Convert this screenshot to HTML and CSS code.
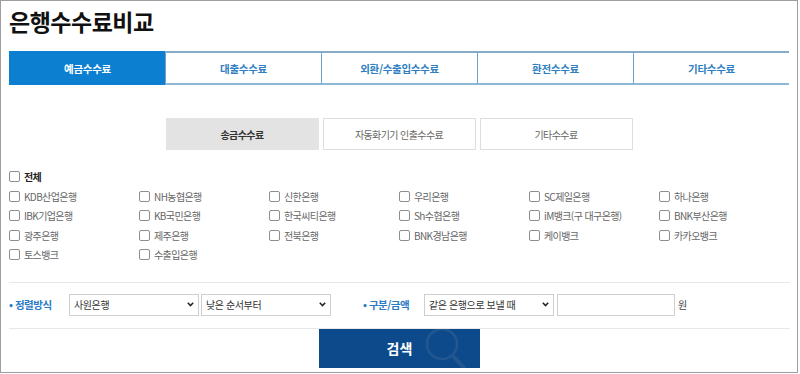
FILE: index.html
```html
<!DOCTYPE html>
<html lang="ko">
<head>
<meta charset="utf-8">
<title>은행수수료비교</title>
<link rel="stylesheet" href="styles.css">
</head>
<body>
<div class="frame">
  <h1 class="title">은행수수료비교</h1>

  <nav class="tabs">
    <div class="tab active">예금수수료</div>
    <div class="tab">대출수수료</div>
    <div class="tab">외환/수출입수수료</div>
    <div class="tab">환전수수료</div>
    <div class="tab">기타수수료</div>
  </nav>

  <div class="subtabs">
    <div class="subtab on">송금수수료</div>
    <div class="subtab">자동화기기 인출수수료</div>
    <div class="subtab">기타수수료</div>
  </div>

  <div class="banks">
    <label class="chk all"><span class="box"></span>전체</label>
    <label class="chk"><span class="box"></span>KDB산업은행</label>
    <label class="chk"><span class="box"></span>NH농협은행</label>
    <label class="chk"><span class="box"></span>신한은행</label>
    <label class="chk"><span class="box"></span>우리은행</label>
    <label class="chk"><span class="box"></span>SC제일은행</label>
    <label class="chk"><span class="box"></span>하나은행</label>
    <label class="chk"><span class="box"></span>IBK기업은행</label>
    <label class="chk"><span class="box"></span>KB국민은행</label>
    <label class="chk"><span class="box"></span>한국씨티은행</label>
    <label class="chk"><span class="box"></span>Sh수협은행</label>
    <label class="chk"><span class="box"></span>iM뱅크(구 대구은행)</label>
    <label class="chk"><span class="box"></span>BNK부산은행</label>
    <label class="chk"><span class="box"></span>광주은행</label>
    <label class="chk"><span class="box"></span>제주은행</label>
    <label class="chk"><span class="box"></span>전북은행</label>
    <label class="chk"><span class="box"></span>BNK경남은행</label>
    <label class="chk"><span class="box"></span>케이뱅크</label>
    <label class="chk"><span class="box"></span>카카오뱅크</label>
    <label class="chk"><span class="box"></span>토스뱅크</label>
    <label class="chk"><span class="box"></span>수출입은행</label>
  </div>

  <div class="form">
    <span class="flabel">• 정렬방식</span>
    <div class="sel s1"><span>사원은행</span><svg class="chev" width="7" height="5" viewBox="0 0 7 5"><path d="M0.8 0.8 L3.5 3.6 L6.2 0.8" fill="none" stroke="#222" stroke-width="1.5"/></svg></div>
    <div class="sel s2"><span>낮은 순서부터</span><svg class="chev" width="7" height="5" viewBox="0 0 7 5"><path d="M0.8 0.8 L3.5 3.6 L6.2 0.8" fill="none" stroke="#222" stroke-width="1.5"/></svg></div>
    <span class="flabel l2">• 구분/금액</span>
    <div class="sel s3"><span>같은 은행으로 보낼 때</span><svg class="chev" width="7" height="5" viewBox="0 0 7 5"><path d="M0.8 0.8 L3.5 3.6 L6.2 0.8" fill="none" stroke="#222" stroke-width="1.5"/></svg></div>
    <div class="inp"></div>
    <span class="won">원</span>
  </div>

  <div class="actions">
    <button class="search">검색
      <svg class="glass" width="70" height="40" viewBox="0 0 70 40"><circle cx="35" cy="15" r="15" fill="none" stroke="#23578f" stroke-width="2.5"/><path d="M46 27 L58 40" stroke="#23578f" stroke-width="4" fill="none"/></svg>
    </button>
  </div>
</div>
</body>
</html>
```
FILE: styles.css
```css
* { box-sizing: border-box; }
body {
  margin: 0;
  background: #fff;
  font-family: "Noto Sans CJK KR", "Noto Sans", sans-serif;
}
.frame {
  width: 798px;
  height: 373px;
  border: 1px solid #9e9e9e;
  padding: 3px 0 0 8px;
  overflow: hidden;
}
.title {
  margin: 0;
  font-size: 23px;
  line-height: 34px;
  font-weight: 700;
  color: #111;
  letter-spacing: -0.5px;
}
.tabs {
  margin-top: 13px;
  width: 780px;
  display: grid;
  grid-template-columns: repeat(5, 1fr);
  height: 34px;
}
.tab {
  display: flex;
  align-items: center;
  justify-content: center;
  border-top: 2px solid #86acc9;
  border-bottom: 2px solid #8fb7d6;
  border-left: 1px solid #6fa3cd;
  font-size: 10.5px;
  font-weight: 700;
  color: #2f7fc2;
  letter-spacing: -0.3px;
}
.tab.active {
  background: #0d7fd1;
  color: #fff;
  border-color: #0d7fd1;
}
.subtabs {
  margin-top: 33px;
  display: flex;
  justify-content: center;
  gap: 4px;
  width: 780px;
}
.subtab {
  width: 153px;
  height: 32px;
  display: flex;
  align-items: center;
  justify-content: center;
  border: 1px solid #dedede;
  font-size: 10px;
  letter-spacing: -0.6px;
  color: #666;
}
.subtab.on {
  background: #e3e3e3;
  border-color: #e3e3e3;
  color: #333;
  font-weight: 700;
}
.banks {
  margin-top: 17px;
  display: grid;
  grid-template-columns: repeat(6, 130px);
  grid-auto-rows: 19.5px;
}
.chk {
  display: flex;
  align-items: center;
  font-size: 10px;
  letter-spacing: -0.6px;
  color: #666;
  white-space: nowrap;
}
.chk.all {
  grid-column: 1 / -1;
  font-weight: 700;
  color: #222;
}
.box {
  width: 11px;
  height: 11px;
  border: 1px solid #8e8e8e;
  border-radius: 2px;
  margin-right: 4px;
  flex: none;
  background: #fff;
}
.form {
  margin-top: 17px;
  width: 781px;
  border-top: 1px solid #e8e8e8;
  border-bottom: 1px solid #e8e8e8;
  padding: 11px 0 12px;
  display: flex;
  align-items: center;
}
.flabel {
  font-size: 10.5px;
  font-weight: 700;
  color: #2a7ac4;
  letter-spacing: -0.5px;
  width: 60px;
}
.flabel.l2 {
  margin-left: 32px;
  width: 61px;
}
.sel {
  width: 130px;
  height: 22px;
  border: 1px solid #cfcfcf;
  display: flex;
  align-items: center;
  justify-content: space-between;
  padding: 0 4px;
  font-size: 10px;
  color: #333;
  letter-spacing: -0.4px;
  background: #fff;
}
.sel.s2 { margin-left: 2px; }
.chev { flex: none; }
.inp {
  width: 118px;
  height: 22px;
  border: 1px solid #cfcfcf;
  margin-left: 3px;
}
.won {
  margin-left: 3px;
  font-size: 10px;
  color: #444;
}
.actions {
  width: 781px;
  display: flex;
  justify-content: center;
}
.search {
  position: relative;
  overflow: hidden;
  width: 161px;
  height: 39px;
  border: 0;
  background: #0c4a8c;
  color: #fff;
  font-family: "Noto Sans CJK KR", sans-serif;
  font-size: 14px;
  font-weight: 700;
  padding: 0;
  margin: 0;
}
.glass {
  position: absolute;
  left: 88px;
  top: 0;
}
```
